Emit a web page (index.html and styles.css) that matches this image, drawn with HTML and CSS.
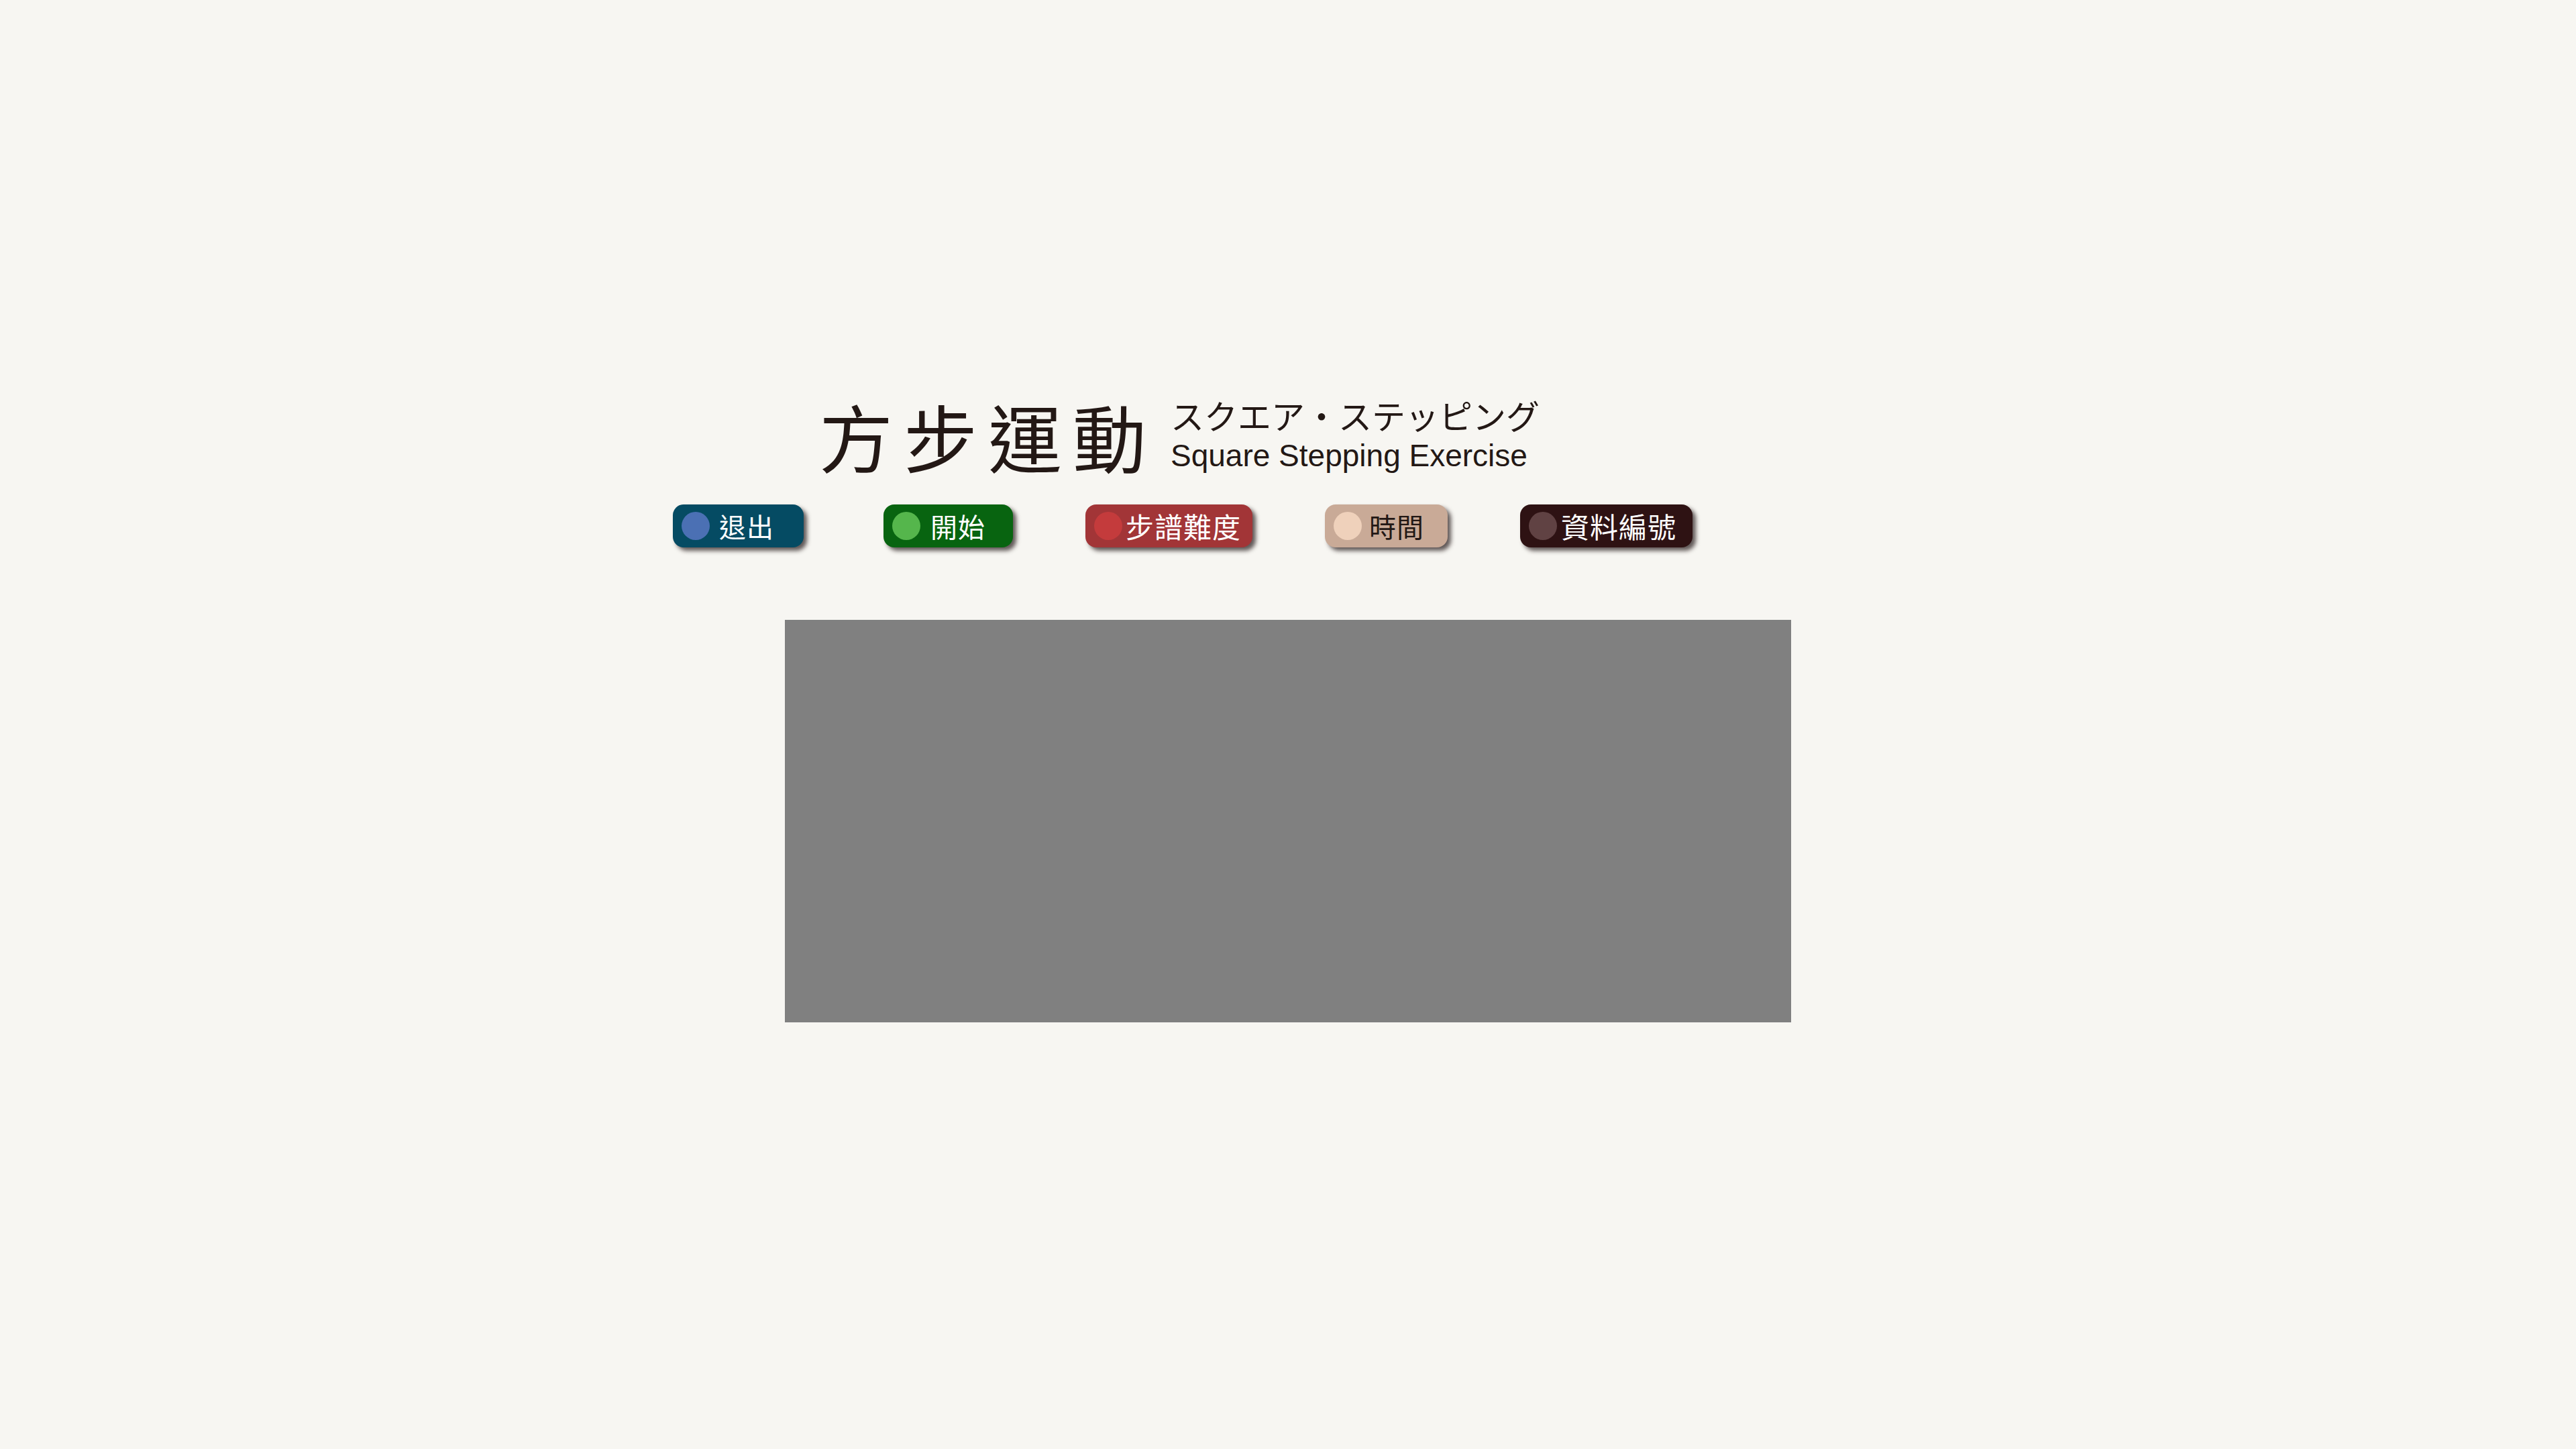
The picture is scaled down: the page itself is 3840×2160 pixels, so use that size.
FILE: index.html
```html
<!DOCTYPE html>
<html lang="zh-Hant">
<head>
<meta charset="utf-8">
<title>方步運動</title>
<link rel="stylesheet" href="styles.css">
</head>
<body>
<div class="page">
  <header class="header">
    <div class="title">
      <h1 class="kanji">方步運動</h1>
      <div class="sub">
        <div class="kana" lang="ja">スクエア・ステッピング</div>
        <div class="en">Square Stepping Exercise</div>
      </div>
    </div>
    <nav class="buttons">
      <button class="btn btn-exit"><span class="dot"></span><span class="label">退出</span></button>
      <button class="btn btn-start"><span class="dot"></span><span class="label">開始</span></button>
      <button class="btn btn-level"><span class="dot"></span><span class="label">步譜難度</span></button>
      <button class="btn btn-time"><span class="dot"></span><span class="label">時間</span></button>
      <button class="btn btn-data"><span class="dot"></span><span class="label">資料編號</span></button>
    </nav>
  </header>
  <main class="stage"></main>
</div>
</body>
</html>
```
FILE: styles.css
```css
html, body {
  margin: 0;
  padding: 0;
  background: #f7f6f2;
}
body {
  width: 3840px;
  height: 2160px;
  overflow: hidden;
  font-family: "Noto Sans CJK TC", "Noto Sans CJK JP", sans-serif;
  color: #231815;
}
.page {
  padding-top: 590px;
}
.header {
  width: 1520px;
  margin-left: calc(50% - 917px);
}
.title {
  display: flex;
  align-items: flex-end;
  padding-left: 218px;
}
.kanji {
  margin: 0;
  font-family: "Noto Sans CJK TC", sans-serif;
  font-weight: 400;
  font-size: 110px;
  line-height: 1;
  letter-spacing: 16px;
}
.sub {
  margin-left: 20px;
  display: flex;
  flex-direction: column;
}
.kana {
  font-family: "Noto Sans CJK JP", sans-serif;
  font-size: 50px;
  line-height: 56px;
  font-weight: 400;
  margin-bottom: 8px;
}
.en {
  font-family: "Liberation Sans", Arial, sans-serif;
  font-size: 46px;
  line-height: 50px;
}
.buttons {
  display: flex;
  align-items: center;
  gap: 108px;
  margin-top: 48px;
}
.btn {
  display: flex;
  align-items: center;
  height: 64px;
  padding: 0 0 0 13px;
  border: 0;
  border-radius: 16px;
  box-shadow: 5px 5px 6px rgba(45, 35, 35, 0.75);
  color: #ffffff;
  font-family: "Noto Sans CJK TC", sans-serif;
  font-size: 40px;
  cursor: pointer;
  box-sizing: border-box;
}
.dot {
  width: 42px;
  height: 42px;
  border-radius: 50%;
  flex: none;
}
.label {
  line-height: 1;
  letter-spacing: 1px;
}
.btn-exit { width: 195px; margin-right: 11px; background: #054b63; }
.btn-exit .dot { background: #4b70b4; }
.btn-exit .label { margin-left: 14px; }
.btn-start { width: 193px; background: #086410; }
.btn-start .dot { background: #55b64c; }
.btn-start .label { margin-left: 15px; }
.btn-level { width: 249px; background: #a23537; }
.btn-level .dot { background: #c43b3c; }
.btn-level .label { margin-left: 5px; font-size: 42px; }
.btn-time { width: 183px; background: #c9aa97; color: #231815; }
.btn-time .dot { background: #efd1bb; }
.btn-time .label { margin-left: 11px; }
.btn-data { width: 257px; background: #2e1213; }
.btn-data .dot { background: #604243; }
.btn-data .label { margin-left: 6px; font-size: 42px; }
.stage {
  width: 1500px;
  height: 600px;
  margin: 108px auto 0;
  background: #808080;
}
```
